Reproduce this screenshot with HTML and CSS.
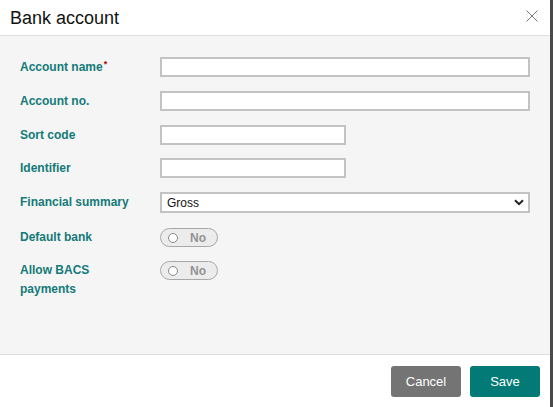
FILE: index.html
```html
<!DOCTYPE html>
<html>
<head>
<meta charset="utf-8">
<link rel="stylesheet" href="styles.css">
</head>
<body>
<div class="modal">
  <div class="modal-header">
    <h1 class="title">Bank account</h1>
    <button class="close" aria-label="Close">
      <svg width="12" height="12" viewBox="0 0 12 12"><path d="M0.5 0.5L11.5 11.5M11.5 0.5L0.5 11.5" stroke="#777" stroke-width="1" fill="none"/></svg>
    </button>
  </div>
  <div class="modal-body">
    <div class="row">
      <label class="label">Account name<span class="req">*</span></label>
      <input class="input wide" type="text">
    </div>
    <div class="row">
      <label class="label">Account no.</label>
      <input class="input wide" type="text">
    </div>
    <div class="row">
      <label class="label">Sort code</label>
      <input class="input short" type="text">
    </div>
    <div class="row">
      <label class="label">Identifier</label>
      <input class="input short" type="text">
    </div>
    <div class="row">
      <label class="label">Financial summary</label>
      <div class="select wide">
        <span>Gross</span>
        <svg width="10" height="7" viewBox="0 0 10 7"><path d="M1 1.2L5 5.2L9 1.2" stroke="#222" stroke-width="2" fill="none"/></svg>
      </div>
    </div>
    <div class="row toggle-row first-toggle">
      <label class="label">Default bank</label>
      <div class="toggle"><span class="knob"></span><span class="toggle-text">No</span></div>
    </div>
    <div class="row toggle-row">
      <label class="label">Allow BACS payments</label>
      <div class="toggle"><span class="knob"></span><span class="toggle-text">No</span></div>
    </div>
  </div>
  <div class="modal-footer">
    <button class="btn btn-cancel">Cancel</button>
    <button class="btn btn-save">Save</button>
  </div>
</div>
</body>
</html>
```

FILE: styles.css
```css
html, body {
  margin: 0;
  padding: 0;
  height: 100%;
}
body {
  background: #4a4a4a;
  font-family: "Liberation Sans", Arial, sans-serif;
}
.modal {
  width: 550px;
  height: 407px;
  background: #ffffff;
  display: flex;
  flex-direction: column;
}
.modal-header {
  height: 35px;
  border-bottom: 1px solid #e0e0e0;
  display: flex;
  align-items: center;
  justify-content: space-between;
  padding: 0 12px 0 10px;
  flex-shrink: 0;
}
.title {
  margin: 0;
  font-size: 18px;
  font-weight: normal;
  color: #111111;
  line-height: 20px;
}
.close {
  border: 0;
  background: transparent;
  padding: 0;
  width: 12px;
  height: 12px;
  display: flex;
  margin-top: -4px;
}
.modal-body {
  flex: 1;
  background: #f5f5f5;
  padding: 21px 20px 0 20px;
  display: flex;
  flex-direction: column;
  gap: 13.75px;
  border-bottom: 1px solid #dedede;
}
.row {
  display: flex;
  align-items: flex-start;
}
.first-toggle {
  margin-top: 1.5px;
}
.label {
  width: 116px;
  margin-right: 24px;
  font-size: 12px;
  font-weight: bold;
  color: #137a78;
  line-height: 20px;
}
.toggle-row .label {
  line-height: 19px;
}
.req {
  color: #b00000;
  font-size: 9px;
  vertical-align: top;
  line-height: 14px;
  margin-left: 1px;
}
.input {
  box-sizing: border-box;
  height: 20px;
  border: 2px solid #c3c3c3;
  background: #ffffff;
  margin: 0;
  padding: 0 4px;
}
.wide {
  width: 370px;
}
.short {
  width: 186px;
}
.select {
  box-sizing: border-box;
  height: 21px;
  border: 2px solid #c3c3c3;
  background: #ffffff;
  display: flex;
  align-items: center;
  justify-content: space-between;
  padding: 0 4px 0 5px;
  font-size: 12px;
  color: #111;
}
.toggle {
  box-sizing: border-box;
  width: 58px;
  height: 19px;
  border: 1px solid #a8a8a8;
  border-radius: 10px;
  background: #ececec;
  display: flex;
  align-items: center;
  padding-left: 7px;
}
.knob {
  width: 8px;
  height: 8px;
  border-radius: 50%;
  border: 1px solid #888;
  background: #fff;
}
.toggle-text {
  margin-left: 12px;
  font-size: 12px;
  font-weight: bold;
  color: #929292;
}
.modal-footer {
  height: 52px;
  flex-shrink: 0;
  display: flex;
  justify-content: flex-end;
  align-items: flex-start;
  padding: 11px 10px 0 0;
  gap: 9px;
  box-sizing: border-box;
}
.btn {
  width: 70px;
  height: 31px;
  border: 0;
  border-radius: 3px;
  color: #ffffff;
  font-family: "Liberation Sans", Arial, sans-serif;
  font-size: 13px;
  padding: 0;
}
.btn-cancel {
  background: #747474;
}
.btn-save {
  background: #037a75;
}
```
